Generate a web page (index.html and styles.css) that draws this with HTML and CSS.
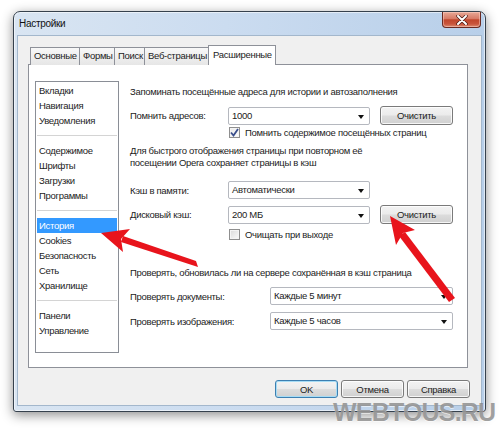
FILE: index.html
```html
<!DOCTYPE html>
<html lang="ru">
<head>
  <meta charset="UTF-8">
  <title>Настройки</title>
  <link rel="stylesheet" href="styles.css">
</head>
<body>

  <!-- Settings dialog -->
  <div class="window">
    <div class="titlebar">
      <span class="title">Настройки</span>
      <div class="close-btn">
        <svg width="14" height="10" viewBox="0 0 14 10">
          <path d="M3 1 L11 9 M11 1 L3 9" stroke="#4a1a14" stroke-width="3.4" stroke-linecap="round"/>
          <path d="M3 1 L11 9 M11 1 L3 9" stroke="#fff" stroke-width="2" stroke-linecap="round"/>
        </svg>
      </div>
    </div>

    <div class="client">
      <div class="tabs">
        <div class="tab tab-1">Основные</div>
        <div class="tab tab-2">Формы</div>
        <div class="tab tab-3">Поиск</div>
        <div class="tab tab-4">Веб-страницы</div>
        <div class="tab tab-active">Расширенные</div>
      </div>

      <div class="panel">
        <ul class="side-list">
          <li>Вкладки</li>
          <li>Навигация</li>
          <li>Уведомления</li>
          <li class="sep"></li>
          <li>Содержимое</li>
          <li>Шрифты</li>
          <li>Загрузки</li>
          <li>Программы</li>
          <li class="sep"></li>
          <li class="selected">История</li>
          <li>Cookies</li>
          <li>Безопасность</li>
          <li>Сеть</li>
          <li>Хранилище</li>
          <li class="sep"></li>
          <li>Панели</li>
          <li>Управление</li>
        </ul>

        <div class="content">
          <p class="caption">Запоминать посещённые адреса для истории и автозаполнения</p>

          <div class="row row-addr">
            <span class="label">Помнить адресов:</span>
            <div class="combo">1000<span class="caret"></span></div>
            <button class="btn btn-clear">Очистить</button>
          </div>

          <label class="check-row">
            <span class="checkbox checked">
              <svg width="9" height="9" viewBox="0 0 9 9"><path d="M1 4.5 L3.5 7.5 L8 1" fill="none" stroke="#3b4f8c" stroke-width="1.8"/></svg>
            </span>
            Помнить содержимое посещённых страниц
          </label>

          <p class="note">Для быстрого отображения страницы при повторном её<br>посещении Opera сохраняет страницы в кэш</p>

          <div class="row row-mem">
            <span class="label">Кэш в памяти:</span>
            <div class="combo">Автоматически<span class="caret"></span></div>
          </div>

          <div class="row row-disk">
            <span class="label">Дисковый кэш:</span>
            <div class="combo">200 МБ<span class="caret"></span></div>
            <button class="btn btn-clear">Очистить</button>
          </div>

          <label class="check-row check-exit">
            <span class="checkbox"></span>
            Очищать при выходе
          </label>

          <p class="caption caption-check">Проверять, обновилась ли на сервере сохранённая в кэш страница</p>

          <div class="row row-docs">
            <span class="label label-wide">Проверять документы:</span>
            <div class="combo combo-wide">Каждые 5 минут<span class="caret"></span></div>
          </div>

          <div class="row row-imgs">
            <span class="label label-wide">Проверять изображения:</span>
            <div class="combo combo-wide">Каждые 5 часов<span class="caret"></span></div>
          </div>
        </div>
      </div>

      <div class="footer">
        <button class="btn btn-default">OK</button>
        <button class="btn">Отмена</button>
        <button class="btn">Справка</button>
      </div>
    </div>
  </div>

  <!-- Red arrows drawn over the screenshot -->
  <svg class="arrows" width="500" height="429" viewBox="0 0 500 429">
    <g fill="#e8141c" stroke="none">
      <path d="M196 261 L198 267 L121 242 L123 236 Z"/>
      <polygon points="101,233 130,229 121,239 123,252"/>
      <path d="M449 302 L455 298 L405 232 L399 236 Z"/>
      <polygon points="390,216 415,230 403,233 396,245"/>
    </g>
  </svg>

  <div class="watermark">WEBTOUS.RU</div>

</body>
</html>
```

FILE: styles.css
```css
/* General */
* {
  margin: 0;
  padding: 0;
  box-sizing: border-box;
}

body {
  width: 500px;
  height: 429px;
  overflow: hidden;
  position: relative;
  background: #fff;
  font-family: "Liberation Sans", Arial, sans-serif;
  font-size: 9.5px;
  letter-spacing: -0.3px;
  color: #1c1c1c;
}

/* Window frame */
.window {
  margin: 11px 0 0 13px;
  width: 473px;
  height: 401px;
  border: 1px solid #36414d;
  border-radius: 7px 7px 3px 3px;
  background: linear-gradient(90deg, #d9e5f2 0%, #cbdcf0 45%, #b8cfe9 100%);
  box-shadow: 0 3px 12px rgba(0, 0, 0, 0.45), inset 0 0 0 1px rgba(255, 255, 255, 0.55);
  display: flex;
  flex-direction: column;
}

.titlebar {
  height: 24px;
  display: flex;
  align-items: flex-start;
  padding: 0 4px 0 5px;
}

.title {
  line-height: 24px;
  font-size: 10px;
  color: #111;
}

.close-btn {
  margin-left: auto;
  width: 39px;
  height: 16px;
  border: 1px solid #6a2a22;
  border-top: none;
  border-radius: 0 0 4px 4px;
  background: linear-gradient(#e8a896 0%, #d77a66 45%, #c1462c 52%, #c9553c 80%, #dc8b70 100%);
  box-shadow: inset 0 0 0 1px rgba(255, 220, 210, 0.45);
  display: flex;
  align-items: center;
  justify-content: center;
}

.client {
  flex: 1;
  margin: 0 4px 6px 4px;
  background: #f0f0f0;
  box-shadow: 0 0 0 1px #a3b7cc;
  padding: 9px 12px 0 10px;
}

/* Tabs */
.tabs {
  height: 20px;
  display: flex;
  align-items: flex-end;
  padding-left: 2px;
  margin-bottom: -1px;
  position: relative;
  z-index: 1;
}

.tab {
  height: 18px;
  line-height: 16px;
  border: 1px solid #8e9199;
  border-bottom: none;
  background: linear-gradient(#f8f8f8, #e6e6e6);
  padding-left: 3px;
  white-space: nowrap;
  margin-right: -1px;
}

.tab-1 { width: 50px; }
.tab-2 { width: 36px; }
.tab-3 { width: 31px; }
.tab-4 { width: 65px; }

.tab-active {
  width: 68px;
  height: 20px;
  line-height: 18px;
  background: #fff;
  padding-left: 4px;
}

.panel {
  width: 440px;
  height: 304px;
  border: 1px solid #8e9199;
  background: #fff;
  display: flex;
  align-items: flex-start;
  padding: 16px 0 0 6px;
}

/* Left category list */
.side-list {
  list-style: none;
  width: 84px;
  height: 272px;
  border: 1px solid #8a8e96;
  padding: 1px;
  flex-shrink: 0;
}

.side-list li {
  height: 15px;
  line-height: 15px;
  padding-left: 2px;
}

.side-list .sep {
  position: relative;
}

.side-list .sep::after {
  content: "";
  position: absolute;
  left: 0;
  right: 0;
  top: 7px;
  border-top: 1px solid #d4d4d4;
}

.side-list .selected {
  background: #3399ff;
  color: #fff;
}

/* Right side */
.content {
  margin-left: 11px;
  margin-top: 4px;
  width: 330px;
}

.caption {
  line-height: 14px;
  white-space: nowrap;
}

.row {
  display: flex;
  align-items: center;
  height: 19px;
}

.row-addr { margin-top: 7px; }
.row-mem { margin-top: 12px; height: 18px; }
.row-disk { margin-top: 6px; }
.row-docs { margin-top: 7px; height: 18px; }
.row-imgs { margin-top: 7px; height: 18px; }

.label {
  width: 98px;
  flex-shrink: 0;
}

.label-wide {
  width: 140px;
}

.combo {
  position: relative;
  width: 142px;
  height: 18px;
  line-height: 16px;
  border: 1px solid #b5b8bf;
  border-radius: 2px;
  background: #fff;
  padding-left: 3px;
  flex-shrink: 0;
}

.combo-wide {
  width: 183px;
}

.caret {
  position: absolute;
  right: 5px;
  top: 7px;
  border-left: 3.5px solid transparent;
  border-right: 3.5px solid transparent;
  border-top: 4px solid #111;
}

.btn {
  font-family: inherit;
  font-size: 9.5px;
  letter-spacing: inherit;
  color: #1c1c1c;
  height: 19px;
  border: 1px solid #7a7a7a;
  border-radius: 3px;
  background: linear-gradient(#f3f3f3 0%, #ebebeb 48%, #dcdcdc 52%, #d0d0d0 100%);
  box-shadow: inset 0 0 0 1px rgba(255, 255, 255, 0.8);
}

.btn-clear {
  width: 73px;
  margin-left: 10px;
}

.check-row {
  display: flex;
  align-items: center;
  height: 13px;
  margin-top: 1px;
  padding-left: 99px;
  white-space: nowrap;
}

.check-exit {
  margin-top: 4px;
}

.checkbox {
  width: 11px;
  height: 11px;
  border: 1px solid #8f8f8f;
  background: linear-gradient(135deg, #dadada, #fbfbfb);
  box-shadow: inset 0 0 0 1px #f4f4f4;
  margin-right: 5px;
  display: flex;
  align-items: center;
  justify-content: center;
}

.checkbox.checked {
  background: linear-gradient(135deg, #e8e8e8, #ffffff);
}

.note {
  margin-top: 6px;
  line-height: 12px;
}

.caption-check {
  margin-top: 25px;
}

/* Dialog buttons */
.footer {
  display: flex;
  justify-content: flex-end;
  gap: 3px;
  margin-top: 12px;
  margin-right: -1px;
}

.footer .btn {
  width: 63px;
  height: 18px;
}

.btn-default {
  border-color: #3c7fb1;
  box-shadow: inset 0 0 0 1px #a6dcf5;
}

/* Overlays */
.arrows {
  position: absolute;
  left: 0;
  top: 0;
  pointer-events: none;
}

.watermark {
  position: absolute;
  left: 333px;
  top: 398px;
  font-family: "Liberation Sans", Arial, sans-serif;
  font-weight: bold;
  font-size: 25px;
  letter-spacing: -0.8px;
  color: rgba(130, 130, 130, 0.75);
  text-shadow: 0 1px 0 rgba(255, 255, 255, 0.6);
}
```
